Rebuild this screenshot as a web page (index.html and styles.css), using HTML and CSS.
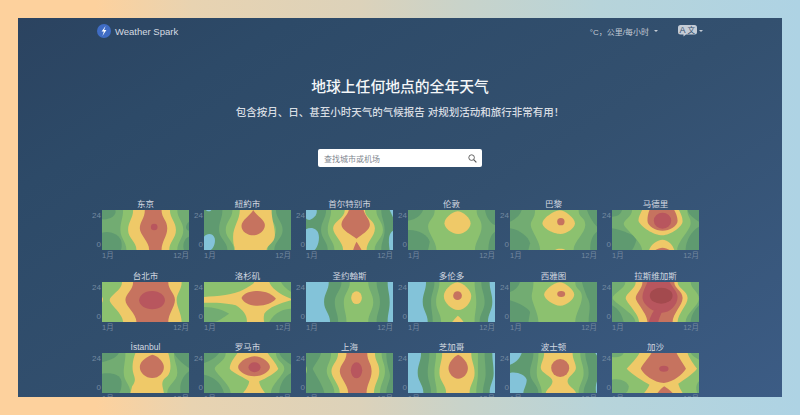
FILE: index.html
```html
<!DOCTYPE html>
<html>
<head>
    <meta charset="utf-8">
    <title>Weather Spark</title>
    <link rel="stylesheet" href="styles.css">
</head>
<body>
<div class="frame">
    <header class="header">
        <div class="brand">
            <svg class="logo" viewBox="0 0 14 14"><circle cx="7" cy="7" r="7" fill="#3f6cc4"/><path d="M8.6 1.9 4.6 7.6h2.3L5.4 12l4-5.9H7.1z" fill="#fff"/></svg>
            <span>Weather Spark</span>
        </div>
        <div class="tools">
            <span class="units">°C，公里/每小时</span><i class="caret units-caret"></i>
            <svg class="lang" viewBox="0 0 19 12"><path d="M2.5 0h14A2.5 2.5 0 0 1 19 2.5v4.5A2.5 2.5 0 0 1 16.5 9.500H8L5.500 11.500V9.500h-3A2.500 2.500 0 0 1 0 7V2.500A2.500 2.500 0 0 1 2.500 0z" fill="#c5ccd6"/><text x="1.5" y="8" class="lang-a">A</text><text x="9.5" y="7.8" class="lang-z">文</text></svg><i class="caret"></i>
        </div>
    </header>

    <section class="hero">
        <h1>地球上任何地点的全年天气</h1>
        <p>包含按月、日、甚至小时天气的气候报告 对规划活动和旅行非常有用！</p>
        <div class="search">
            <span>查找城市或机场</span>
            <svg viewBox="0 0 10 10"><circle cx="4" cy="4" r="3.1" fill="none" stroke="#555" stroke-width="1"/><path d="M6.3 6.3 9.3 9.3" stroke="#555" stroke-width="1.3"/></svg>
        </div>
    </section>

    <div class="grid">
        <!-- row 1 -->
        <div class="city"><h3>东京</h3><div class="plot"><div class="ticks"><span>24</span><span>0</span></div>
            <svg viewBox="0 0 260 120" preserveAspectRatio="none"><rect class="m" width="260" height="120"/>
                <path class="d" d="M0 0H40C45 15 25 30 0 28Z"/><path class="d" d="M0 68C25 60 55 75 58 95 60 110 58 120 55 120H0Z"/><path class="d" d="M260 35C248 45 248 60 260 62Z"/><path class="d" d="M260 80C245 85 240 105 245 120H260Z"/>
                <path class="l" d="M63 0C63 25 55 35 55 60S73 95 73 120H225C225 95 243 85 243 60S225 25 225 0Z"/>
                <path class="y" d="M93 0C93 25 78 35 78 60S103 95 103 120H201C201 95 221 85 221 60S203 25 203 0Z"/>
                <path class="c" d="M128 0C128 25 113 35 113 55S141 95 141 120H178C178 95 195 80 195 55S178 25 178 0Z"/>
                <circle class="r" cx="156" cy="51" r="10"/></svg>
        </div><div class="months"><span>1月</span><span>12月</span></div></div>

        <div class="city"><h3>紐約市</h3><div class="plot"><div class="ticks"><span>24</span><span>0</span></div>
            <svg viewBox="0 0 260 120" preserveAspectRatio="none"><rect class="d" width="260" height="120"/>
                <path class="b" d="M0 80C10 68 28 70 32 85 36 100 25 120 20 120H0Z"/><path class="b" d="M5 0H22C20 5 10 5 5 0Z"/>
                <path class="m" d="M55 0C55 25 45 35 45 60S70 95 70 120H210C210 95 235 85 235 60S215 25 215 0Z"/>
                <path class="l" d="M85 0C85 25 65 35 65 60S90 95 90 120H190C190 95 215 85 215 60S190 25 190 0Z"/>
                <path class="y" d="M107 0C107 30 87 50 87 80S92 105 92 120H187C187 105 212 100 212 75S202 30 202 0Z"/>
                <path class="c" d="M147 0C140 15 112 30 112 48 112 65 130 76 147 76 165 76 182 62 182 45 182 30 155 15 147 0Z"/></svg>
        </div><div class="months"><span>1月</span><span>12月</span></div></div>

        <div class="city"><h3>首尔特别市</h3><div class="plot"><div class="ticks"><span>24</span><span>0</span></div>
            <svg viewBox="0 0 260 120" preserveAspectRatio="none"><rect class="d" width="260" height="120"/>
                <path class="b" d="M0 0H32C35 15 20 28 10 30 5 30 2 28 0 25Z"/><path class="b" d="M0 58C15 50 35 55 38 75 42 95 30 120 25 120H0Z"/><path class="b" d="M250 0H260V22Z"/><path class="b" d="M260 62C248 70 245 85 250 120H260Z"/>
                <path class="m" d="M60 0C60 25 45 35 45 60S65 95 65 120H225C225 95 235 85 235 60S225 25 225 0Z"/>
                <path class="l" d="M75 0C75 25 65 35 65 60S85 95 85 120H205C205 95 230 85 230 60S210 25 210 0Z"/>
                <path class="y" d="M116 0C116 25 81 35 81 55S111 95 111 120H181C181 95 206 80 206 55S176 25 176 0Z"/>
                <path class="c" d="M128 0H172C175 15 191 28 191 44 191 60 165 75 151 86 137 75 106 60 106 44 106 28 125 15 128 0Z"/><path class="c" d="M151 95C146 105 143 112 141 120H166C163 112 157 105 151 95Z"/></svg>
        </div><div class="months"><span>1月</span><span>12月</span></div></div>

        <div class="city"><h3>伦敦</h3><div class="plot"><div class="ticks"><span>24</span><span>0</span></div>
            <svg viewBox="0 0 260 120" preserveAspectRatio="none"><rect class="m" width="260" height="120"/>
                <path class="d" d="M0 0H45C40 15 25 28 0 32Z"/><path class="d" d="M0 60C30 58 60 75 65 95L60 120H0Z"/><path class="d" d="M230 0H260V45C245 40 233 20 230 0Z"/><path class="d" d="M260 65C245 75 240 100 240 120H260Z"/>
                <path class="l" d="M80 0C80 25 60 30 60 50S85 95 85 120H200C200 95 220 75 220 50S205 25 205 0Z"/>
                <path class="y" d="M148 4C130 6 109 25 109 40 109 55 130 72 150 72 170 72 187 55 187 40 187 25 165 4 148 4Z"/></svg>
        </div><div class="months"><span>1月</span><span>12月</span></div></div>

        <div class="city"><h3>巴黎</h3><div class="plot"><div class="ticks"><span>24</span><span>0</span></div>
            <svg viewBox="0 0 260 120" preserveAspectRatio="none"><rect class="m" width="260" height="120"/>
                <path class="d" d="M0 0H35C30 15 20 25 0 35Z"/><path class="d" d="M0 55C30 60 55 80 60 100L55 120H0Z"/><path class="d" d="M230 0H260V50C245 35 235 15 230 0Z"/><path class="d" d="M260 65C245 75 238 100 240 120H260Z"/>
                <path class="l" d="M75 0C75 25 62 30 62 45S90 95 90 120H190C190 95 225 70 225 45S205 25 205 0Z"/>
                <path class="y" d="M148 1C130 3 97 25 97 40 97 55 130 72 150 72 170 72 194 55 194 40 194 25 165 1 148 1Z"/>
                <circle class="c" cx="152" cy="35" r="11"/><path class="y" d="M135 120C140 115 160 115 165 120Z"/></svg>
        </div><div class="months"><span>1月</span><span>12月</span></div></div>

        <div class="city"><h3>马德里</h3><div class="plot"><div class="ticks"><span>24</span><span>0</span></div>
            <svg viewBox="0 0 260 120" preserveAspectRatio="none"><rect class="m" width="260" height="120"/>
                <path class="d" d="M0 0H30C25 15 15 20 0 20Z"/><path class="d" d="M0 55C30 60 65 75 75 85 70 100 65 115 60 120H0Z"/><path class="d" d="M225 0H260V35C245 25 230 15 225 0Z"/><path class="d" d="M260 50C240 60 220 90 220 120H260Z"/>
                <path class="l" d="M60 0C60 20 35 30 35 42S90 95 90 120H195C195 95 235 60 235 40S225 20 225 0Z"/>
                <path class="y" d="M90 0C85 12 79 20 79 32 85 50 125 76 151 76 175 76 211 50 211 34 211 20 205 10 200 0Z"/>
                <path class="c" d="M112 0C108 10 106 20 106 32 106 48 130 62 151 62 172 62 196 48 196 32 196 20 190 8 186 0Z"/>
                <ellipse class="r" cx="151" cy="32" rx="26" ry="24"/>
                <path class="y" d="M111 120C115 105 135 89 151 89 167 89 182 105 186 120Z"/><path class="c" d="M130 120C135 116 145 113 151 113 157 113 167 116 172 120Z"/></svg>
        </div><div class="months"><span>1月</span><span>12月</span></div></div>

        <!-- row 2 -->
        <div class="city"><h3>台北市</h3><div class="plot"><div class="ticks"><span>24</span><span>0</span></div>
            <svg viewBox="0 0 260 120" preserveAspectRatio="none"><rect class="l" width="260" height="120"/>
                <path class="y" d="M0 45C4 48 4 58 0 62Z"/>
                <path class="y" d="M60 0C60 25 23 40 23 54S63 95 63 120H238C238 95 223 75 223 54S238 25 238 0Z"/>
                <path class="c" d="M93 0C93 25 70 35 70 54S103 95 103 120H198C198 95 218 75 218 54S198 25 198 0Z"/>
                <path class="r" d="M150 27C125 27 111 42 111 55 111 70 130 82 150 82 172 82 188 70 188 55 188 40 172 27 150 27Z"/></svg>
        </div><div class="months"><span>1月</span><span>12月</span></div></div>

        <div class="city"><h3>洛杉矶</h3><div class="plot"><div class="ticks"><span>24</span><span>0</span></div>
            <svg viewBox="0 0 260 120" preserveAspectRatio="none"><rect class="l" width="260" height="120"/>
                <path class="m" d="M0 75C30 75 60 85 75 95 60 105 40 120 30 120H0Z"/><path class="m" d="M230 0H260V30C245 20 235 10 230 0Z"/><path class="m" d="M195 120C210 90 240 80 260 80V120Z"/>
                <path class="y" d="M0 45C40 42 90 40 120 22 140 10 150 5 150 0H195C200 15 220 35 260 50V55C225 65 195 75 180 95 178 105 178 115 180 120H128C130 105 120 85 95 70 70 62 30 62 0 62Z"/>
                <path class="c" d="M112 48C118 35 135 27 160 27 185 27 205 38 215 50 205 62 185 71 160 71 135 71 118 62 112 48Z"/></svg>
        </div><div class="months"><span>1月</span><span>12月</span></div></div>

        <div class="city"><h3>圣约翰斯</h3><div class="plot"><div class="ticks"><span>24</span><span>0</span></div>
            <svg viewBox="0 0 260 120" preserveAspectRatio="none"><rect class="b" width="260" height="120"/>
                <path class="d" d="M68 0C68 25 54 35 54 60S72 95 72 120H244C244 95 250 85 250 60S244 25 244 0Z"/>
                <path class="m" d="M106 0C106 25 86 35 86 60S96 95 96 120H211C211 95 221 85 221 60S211 25 211 0Z"/>
                <path class="l" d="M131 0C131 25 113 35 113 60S121 95 121 120H186C186 95 201 85 201 60S186 25 186 0Z"/>
                <ellipse class="y" cx="151" cy="47" rx="16" ry="19"/></svg>
        </div><div class="months"><span>1月</span><span>12月</span></div></div>

        <div class="city"><h3>多伦多</h3><div class="plot"><div class="ticks"><span>24</span><span>0</span></div>
            <svg viewBox="0 0 260 120" preserveAspectRatio="none"><rect class="b" width="260" height="120"/>
                <path class="d" d="M54 0C54 25 44 35 44 60S59 95 59 120H239C239 95 252 85 252 60S244 25 244 0Z"/>
                <path class="m" d="M79 0C79 25 69 35 69 60S74 95 74 120H214C214 95 229 85 229 60S219 25 219 0Z"/>
                <path class="l" d="M94 0C94 25 84 35 84 60S99 95 99 120H199C199 95 204 85 204 60S199 25 199 0Z"/>
                <path class="y" d="M148 1C130 3 107 25 107 42 107 62 130 84 150 84 170 84 189 62 189 42 189 25 165 3 148 1Z"/>
                <circle class="c" cx="148" cy="41" r="13"/><path class="y" d="M132 120C138 112 144 105 149 101 155 105 161 112 166 120Z"/></svg>
        </div><div class="months"><span>1月</span><span>12月</span></div></div>

        <div class="city"><h3>西雅图</h3><div class="plot"><div class="ticks"><span>24</span><span>0</span></div>
            <svg viewBox="0 0 260 120" preserveAspectRatio="none"><rect class="m" width="260" height="120"/>
                <path class="d" d="M0 0H30C25 15 15 25 0 30Z"/><path class="d" d="M0 55C30 65 50 75 60 90L55 120H0Z"/><path class="d" d="M215 0H260V120H235C235 90 245 70 230 45 225 30 218 15 215 0Z"/>
                <path class="l" d="M70 0C70 25 65 30 65 45S85 95 85 120H195C195 95 215 70 215 45S195 25 195 0Z"/>
                <path class="y" d="M148 1C130 3 102 25 102 38 102 50 130 71 150 71 170 71 192 50 192 38 192 25 165 1 148 1Z"/>
                <ellipse class="c" cx="153" cy="36" rx="12" ry="9"/></svg>
        </div><div class="months"><span>1月</span><span>12月</span></div></div>

        <div class="city"><h3>拉斯维加斯</h3><div class="plot"><div class="ticks"><span>24</span><span>0</span></div>
            <svg viewBox="0 0 260 120" preserveAspectRatio="none"><rect class="m" width="260" height="120"/>
                <path class="d" d="M0 70C20 80 30 100 35 120H0Z"/><path class="d" d="M260 70C245 85 235 105 235 120H260Z"/>
                <path class="l" d="M40 0C40 20 2 35 2 48S70 95 70 120H220C220 95 260 70 260 50S235 20 235 0Z"/>
                <path class="y" d="M71 0C71 20 41 35 41 48S81 95 81 120H196C196 95 226 70 226 48S196 20 196 0Z"/>
                <path class="c" d="M91 0C91 20 71 35 71 48S106 95 106 120H181C181 95 211 70 211 48S186 20 186 0Z"/>
                <path class="r" d="M106 0C100 15 91 30 91 45 91 70 125 92 150 92 172 92 196 70 196 45 196 30 178 12 172 0Z"/><path class="r" d="M110 120C115 100 125 85 130 80L150 88C145 100 140 112 138 120Z"/>
                <ellipse class="x" cx="147" cy="41" rx="34" ry="24"/></svg>
        </div><div class="months"><span>1月</span><span>12月</span></div></div>

        <!-- row 3 -->
        <div class="city"><h3>İstanbul</h3><div class="plot"><div class="ticks"><span>24</span><span>0</span></div>
            <svg viewBox="0 0 260 120" preserveAspectRatio="none"><rect class="m" width="260" height="120"/>
                <path class="d" d="M0 0H50C45 12 30 20 0 28Z"/><path class="d" d="M0 62C30 58 55 65 58 85 60 100 55 120 50 120H0Z"/><path class="d" d="M215 0H260V45C245 35 225 20 215 0Z"/><path class="d" d="M260 55C240 70 230 95 235 120H260Z"/>
                <path class="l" d="M70 0C70 25 65 35 65 60S85 95 85 120H195C195 95 225 85 225 60S215 25 215 0Z"/>
                <path class="y" d="M100 0C92 20 88 45 95 65 100 80 100 85 90 100L85 120H185C182 100 172 85 195 70 210 55 205 25 198 0Z"/>
                <path class="c" d="M150 5C125 15 113 28 113 42 113 60 130 75 150 75 170 75 185 60 185 42 185 25 165 8 150 5Z"/></svg>
        </div><div class="months"><span>1月</span><span>12月</span></div></div>

        <div class="city"><h3>罗马市</h3><div class="plot"><div class="ticks"><span>24</span><span>0</span></div>
            <svg viewBox="0 0 260 120" preserveAspectRatio="none"><rect class="m" width="260" height="120"/>
                <path class="d" d="M0 0H45C35 15 15 25 0 30Z"/><path class="d" d="M0 65C25 70 50 85 60 120H0Z"/><path class="d" d="M225 0H260V35C245 25 230 15 225 0Z"/><path class="d" d="M260 60C240 70 225 95 225 120H260Z"/>
                <path class="l" d="M65 0C65 25 32 35 32 47S80 95 80 120H200C200 95 240 65 240 47S215 25 215 0Z"/>
                <path class="y" d="M100 0C90 15 77 30 77 47 85 60 125 75 135 85 135 95 125 110 117 120H182C172 105 165 95 165 85 185 75 215 60 222 47 215 30 200 15 190 0Z"/>
                <path class="c" d="M150 10C125 12 102 30 102 42 102 55 125 70 150 70 175 70 197 55 197 42 197 30 175 10 150 10Z"/>
                <ellipse class="r" cx="151" cy="43" rx="18" ry="15"/></svg>
        </div><div class="months"><span>1月</span><span>12月</span></div></div>

        <div class="city"><h3>上海</h3><div class="plot"><div class="ticks"><span>24</span><span>0</span></div>
            <svg viewBox="0 0 260 120" preserveAspectRatio="none"><rect class="m" width="260" height="120"/>
                <path class="d" d="M0 0H45C40 20 25 35 20 48 28 65 50 95 55 120H0Z"/><path class="d" d="M240 0H260V120H240C240 95 255 80 250 60S240 25 240 0Z"/><path class="l" d="M0 40C4 44 4 56 0 62Z"/>
                <path class="l" d="M75 0C75 25 62 35 62 55S85 95 85 120H221C221 95 236 80 236 55S226 25 226 0Z"/>
                <path class="y" d="M96 0C96 25 76 35 76 55S101 95 101 120H203C203 95 219 80 219 55S206 25 206 0Z"/>
                <path class="c" d="M121 0C121 25 101 35 101 55S126 95 126 120H181C181 95 196 80 196 55S183 25 183 0Z"/>
                <ellipse class="r" cx="151" cy="52" rx="17" ry="24"/></svg>
        </div><div class="months"><span>1月</span><span>12月</span></div></div>

        <div class="city"><h3>芝加哥</h3><div class="plot"><div class="ticks"><span>24</span><span>0</span></div>
            <svg viewBox="0 0 260 120" preserveAspectRatio="none"><rect class="b" width="260" height="120"/>
                <path class="d" d="M39 0C39 25 29 35 29 60S46 95 46 120H244C244 95 256 85 256 60S252 25 252 0Z"/>
                <path class="m" d="M64 0C64 25 59 35 59 60S69 95 69 120H224C224 95 232 85 232 60S229 25 229 0Z"/>
                <path class="l" d="M84 0C84 25 79 35 79 60S86 95 86 120H204C204 95 209 85 209 60S209 25 209 0Z"/>
                <path class="y" d="M102 0C102 25 94 35 94 60S114 95 114 120H184C184 95 199 85 199 60S189 25 189 0Z"/>
                <path class="c" d="M150 5C135 12 121 30 121 45 121 62 135 77 150 77 166 77 179 62 179 45 179 30 165 12 150 5Z"/></svg>
        </div><div class="months"><span>1月</span><span>12月</span></div></div>

        <div class="city"><h3>波士顿</h3><div class="plot"><div class="ticks"><span>24</span><span>0</span></div>
            <svg viewBox="0 0 260 120" preserveAspectRatio="none"><rect class="d" width="260" height="120"/>
                <path class="b" d="M0 0H35C30 15 20 28 0 35Z"/><path class="b" d="M0 60C20 55 45 65 50 80 50 95 40 110 40 120H0Z"/><path class="b" d="M255 0H260V8Z"/><path class="b" d="M260 85C256 95 255 110 258 120H260Z"/>
                <path class="m" d="M70 0C70 25 60 35 60 60S85 95 85 120H220C220 95 235 85 235 60S225 25 225 0Z"/>
                <path class="l" d="M85 0C85 25 80 35 80 60S95 95 95 120H205C205 95 220 85 220 60S210 25 210 0Z"/>
                <path class="y" d="M102 0C102 20 92 30 92 45 92 60 127 70 127 85 127 100 107 110 107 120H197C197 110 172 100 172 85 172 70 197 60 197 45 197 30 187 20 187 0Z"/>
                <circle class="c" cx="150" cy="45" r="27"/></svg>
        </div><div class="months"><span>1月</span><span>12月</span></div></div>

        <div class="city"><h3>加沙</h3><div class="plot"><div class="ticks"><span>24</span><span>0</span></div>
            <svg viewBox="0 0 260 120" preserveAspectRatio="none"><rect class="l" width="260" height="120"/>
                <path class="m" d="M0 0H35C30 12 15 15 0 12Z"/><path class="m" d="M0 80C25 75 45 85 50 100 50 110 45 120 40 120H0Z"/><path class="m" d="M260 85C250 95 250 110 255 120H260Z"/><path class="m" d="M235 0H260V20C250 15 240 8 235 0Z"/>
                <path class="y" d="M82 0C75 15 55 35 44 47 60 65 95 85 112 95 108 105 100 115 96 120H211C205 110 200 100 198 92 215 80 240 65 254 47 245 35 230 15 226 0Z"/>
                <path class="c" d="M118 0C110 15 90 35 86 47 95 65 125 88 155 90 185 85 210 65 221 47 215 35 200 15 193 0Z"/>
                <ellipse class="r" cx="155" cy="47" rx="14" ry="9"/><path class="c" d="M136 120C142 112 150 104 156 100 162 104 174 112 181 120Z"/></svg>
        </div><div class="months"><span>1月</span><span>12月</span></div></div>
    </div>
</div>
</body>
</html>
```

FILE: styles.css
```css
* {
    margin: 0;
    padding: 0;
    box-sizing: border-box;
}
body {
    width: 800px;
    height: 415px;
    overflow: hidden;
    padding: 18px;
    background: linear-gradient(90deg, #fdd19d 0, #fdd19d 12%, #e8d3b1 24%, #dcd2ba 45%, #c8d3ca 58%, #b7d4da 75%, #aed3e4 100%);
    font-family: "Liberation Sans", "Noto Sans CJK SC", sans-serif;
}
.frame {
    width: 764px;
    height: 379px;
    overflow: hidden;
    background: linear-gradient(148deg, #2b4360 0, #2d4a68 20%, #33506f 55%, #3c5c85 100%);
}

.header {
    display: flex;
    justify-content: space-between;
    align-items: center;
    height: 26px;
    padding: 0 79px;
}
.brand {
    display: flex;
    align-items: center;
    gap: 4px;
    font-size: 9.5px;
    color: #d5dbe2;
}
.logo {
    width: 14px;
    height: 14px;
}
.tools {
    display: flex;
    align-items: center;
    font-size: 8px;
    color: #c3cbd5;
}
.units-caret {
    margin-right: 20px;
    margin-left: 5px;
}
.caret {
    width: 0;
    height: 0;
    border: 2px solid transparent;
    border-top-color: #c3cbd5;
    border-bottom: 0;
}
.lang {
    width: 19px;
    height: 12px;
    margin-right: 2px;
}
.lang-a {
    font-size: 9px;
    fill: #33506f;
}
.lang-z {
    font-size: 7.5px;
    fill: #33506f;
}

.hero {
    padding-top: 33px;
    text-align: center;
}
.hero h1 {
    font-size: 14.8px;
    line-height: 20px;
    font-weight: 500;
    color: #f4f6f8;
}
.hero p {
    margin-top: 7px;
    font-size: 10.5px;
    line-height: 16px;
    font-weight: 500;
    color: #d8dde3;
}
.search {
    display: flex;
    justify-content: space-between;
    align-items: center;
    width: 164px;
    height: 18px;
    margin: 29px auto 0;
    padding: 0 5px 0 6px;
    border-radius: 2px;
    background: #fff;
    font-size: 8px;
    color: #7f8790;
}
.search svg {
    width: 9px;
    height: 9px;
}

.grid {
    display: grid;
    grid-template-columns: repeat(6, 102px);
    grid-auto-rows: 71.5px;
    margin: 32px 0 0 69px;
}
.city h3 {
    margin-left: 15px;
    height: 11px;
    font-size: 8.5px;
    line-height: 11px;
    font-weight: 400;
    text-align: center;
    color: #d3d9e0;
}
.plot {
    display: flex;
}
.plot svg {
    display: block;
    width: 87px;
    height: 40px;
}
.ticks {
    display: flex;
    flex-direction: column;
    justify-content: space-between;
    align-items: flex-end;
    width: 15px;
    padding: 1px 1px 0 0;
    font-size: 8px;
    line-height: 10px;
    color: #7489a0;
}
.months {
    display: flex;
    justify-content: space-between;
    margin-left: 15px;
    padding-top: 1px;
    font-size: 7.5px;
    line-height: 10px;
    color: #7489a0;
}

/* temperature bands */
.b { fill: #83c3d9; }
.d { fill: #5f9a70; }
.m { fill: #72ac72; }
.l { fill: #8cc16f; }
.y { fill: #efc968; }
.c { fill: #c6735f; }
.r { fill: #b8565e; }
.x { fill: #a34a4e; }
```
